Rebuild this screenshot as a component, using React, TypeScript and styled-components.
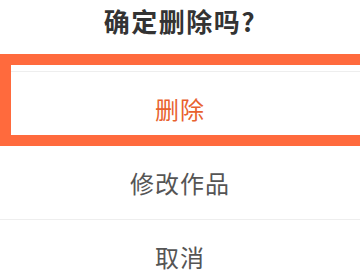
import styled, { createGlobalStyle } from "styled-components"

const GlobalStyle = createGlobalStyle`
  html, body {
    margin: 0;
    padding: 0;
    background: #ffffff;
  }
  body {
    font-family: "Noto Sans CJK SC", "Noto Sans", sans-serif;
    overflow: hidden;
  }
`

const Sheet = styled.div`
  position: relative;
  width: 360px;
  height: 270px;
  overflow: hidden;
  background: #ffffff;
`

const Title = styled.div`
  height: 72px;
  box-sizing: border-box;
  padding-top: 4px;
  text-align: center;
  font-size: 26px;
  line-height: 34px;
  font-weight: 700;
  letter-spacing: 1.5px;
  color: #333333;
  border-bottom: 1px solid #eeeeee;
`

const Option = styled.div<{ $danger?: boolean }>`
  display: flex;
  align-items: center;
  justify-content: center;
  height: 73px;
  font-size: 24px;
  letter-spacing: 1px;
  color: ${(p) => (p.$danger ? "#e8622e" : "#555555")};
  border-bottom: 1px solid #eeeeee;
`

/* annotation frame drawn over the delete option */
const Highlight = styled.div`
  position: absolute;
  top: 54px;
  left: 0;
  right: -12px;
  height: 92px;
  box-sizing: border-box;
  border: 11px solid #ff6a3d;
  pointer-events: none;
`

const App: React.FC = () => {
  return (
    <Sheet>
      <GlobalStyle />
      <Title>确定删除吗?</Title>
      <Option $danger>删除</Option>
      <Option>修改作品</Option>
      <Option>取消</Option>
      <Highlight />
    </Sheet>
  )
}

export default App
